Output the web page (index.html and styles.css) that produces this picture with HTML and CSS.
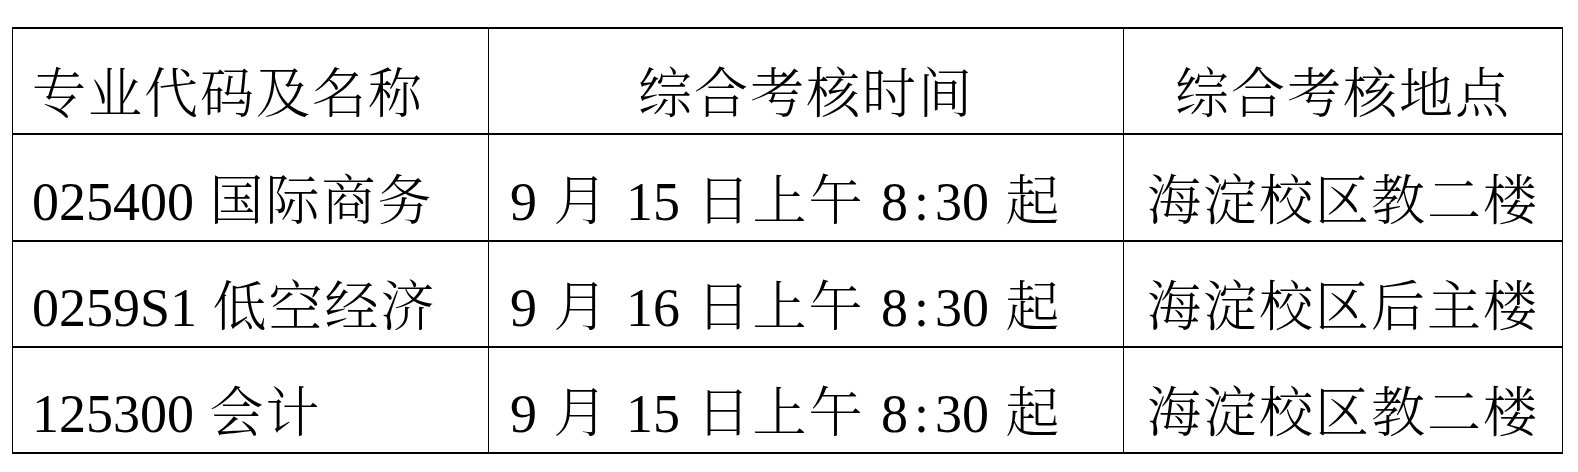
FILE: index.html
```html
<!DOCTYPE html>
<html lang="zh-CN">
<head>
<meta charset="utf-8">
<title>综合考核安排</title>
<link rel="stylesheet" href="styles.css">
</head>
<body>
<div class="sheet">
  <div class="cell head left"><span class="han">专业代码及名称</span></div>
  <div class="cell head mid"><span class="han">综合考核时间</span></div>
  <div class="cell head last"><span class="han">综合考核地点</span></div>

  <div class="cell left">025400 <span class="han">国际商务</span></div>
  <div class="cell time">9 <span class="han">月</span> 15 <span class="han">日上午</span> 8<span class="colon">:</span>30 <span class="han">起</span></div>
  <div class="cell place last"><span class="han">海淀校区教二楼</span></div>

  <div class="cell left">0259S1 <span class="han">低空经济</span></div>
  <div class="cell time">9 <span class="han">月</span> 16 <span class="han">日上午</span> 8<span class="colon">:</span>30 <span class="han">起</span></div>
  <div class="cell place last"><span class="han">海淀校区后主楼</span></div>

  <div class="cell left">125300 <span class="han">会计</span></div>
  <div class="cell time">9 <span class="han">月</span> 15 <span class="han">日上午</span> 8<span class="colon">:</span>30 <span class="han">起</span></div>
  <div class="cell place last"><span class="han">海淀校区教二楼</span></div>
</div>
</body>
</html>
```

FILE: styles.css
```css
html, body {
  margin: 0;
  padding: 0;
  background: #ffffff;
}

body {
  padding: 27px 0 0 12px;
}

.sheet {
  display: grid;
  width: 1551px;
  box-sizing: border-box;
  grid-template-columns: 476px 635px 438px;
  grid-template-rows: 106px 107px 106px 106px;
  border-left: 1px solid #000;
  border-right: 1px solid #000;
  border-bottom: 2px solid #000;
  font-family: "Liberation Serif", "Noto Serif CJK SC", "Noto Sans CJK SC", serif;
  font-size: 54px;
  font-weight: 300;
  color: #000;
}

.cell {
  box-sizing: border-box;
  border-top: 2px solid #000;
  border-right: 1px solid #000;
  display: flex;
  align-items: center;
  padding-top: 28px;
  line-height: 1;
  white-space: pre;
}

.cell.last {
  border-right: none;
}

.han {
  letter-spacing: 2px;
}

.colon {
  display: inline-block;
  width: 0.5em;
  text-align: center;
}

.left {
  padding-left: 19px;
  word-spacing: 2px;
}

.time {
  padding-left: 21px;
  word-spacing: 3px;
}

.head.mid,
.head.last,
.place {
  justify-content: center;
}
```
